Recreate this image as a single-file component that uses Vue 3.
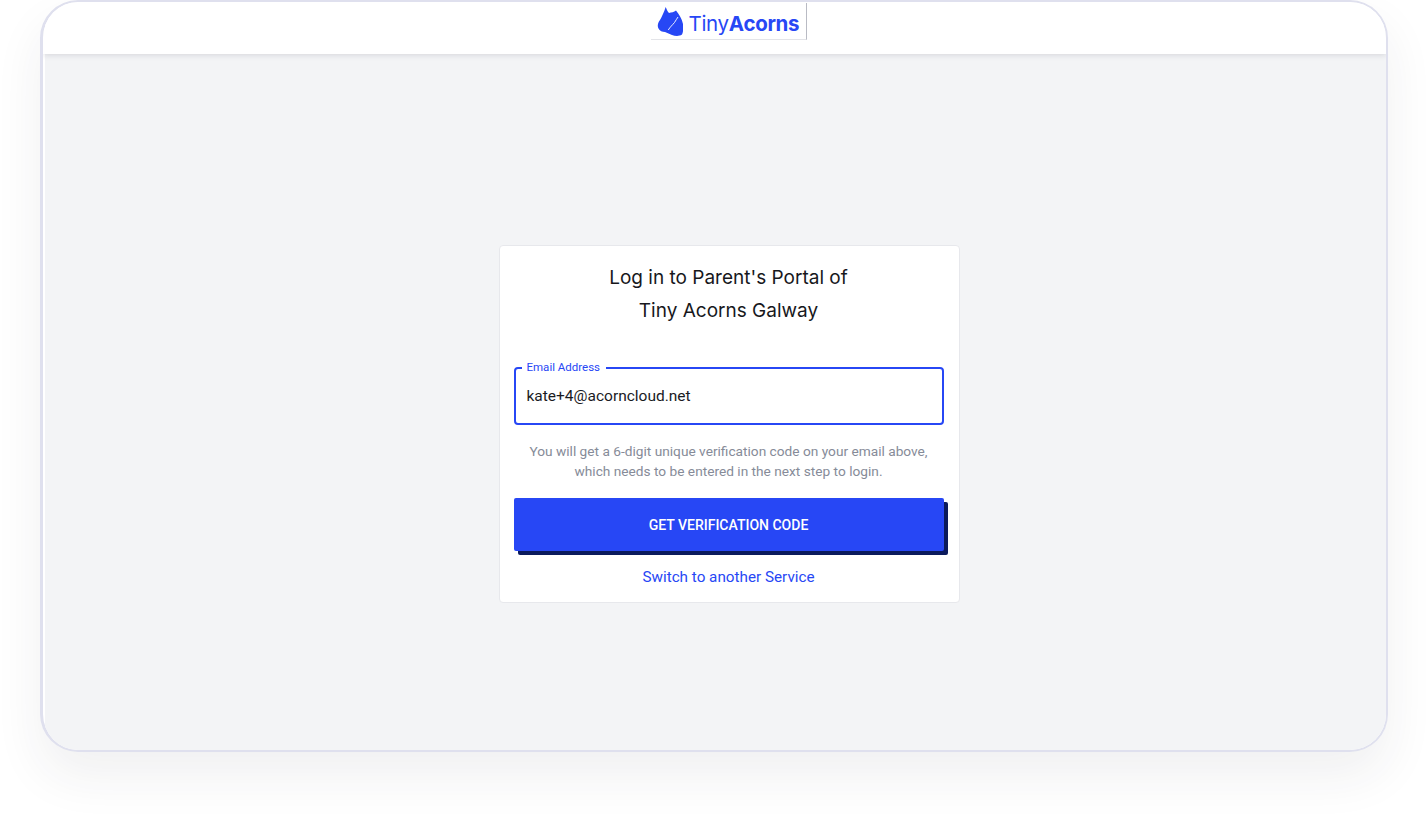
<template>
  <div class="page">
    <div class="frame">
      <header class="topbar">
        <div class="logo">
          <svg class="logo-icon" width="26" height="29" viewBox="0 0 26 29">
            <path d="M8.7 0 C9.5 2 10.5 4.5 12 6 C14.5 5.5 17 5 19 3.5 C22 7 25 12 26 17 C26.5 21 26.3 25 25 27.5 C22 29.5 18 29 15 28 C12.5 27 10.5 26 8 25 C5.5 25 2.5 24 1.5 21.5 C0 19 1 15.5 3 13 C5 9.5 7 5 8.7 0 Z" fill="#2747f5" />
            <path d="M11.3 23 C13 20 15.5 18 17.5 15.5 C18.7 13.8 19.8 11.5 21 10" fill="none" stroke="#fff" stroke-width="0.9" />
          </svg>
          <span class="logo-text">Tiny<b>Acorns</b></span>
        </div>
      </header>
      <main class="content">
        <section class="card">
          <h1 class="title">Log in to Parent's Portal of<br />Tiny Acorns Galway</h1>
          <div class="field">
            <label class="field-label">Email Address</label>
            <span class="value">kate+4@acorncloud.net</span>
          </div>
          <p class="hint">
            You will get a 6-digit unique verification code on your email above,<br />
            which needs to be entered in the next step to login.
          </p>
          <button class="submit">GET VERIFICATION CODE</button>
          <a class="switch">Switch to another Service</a>
        </section>
      </main>
    </div>
  </div>
</template>

<script setup>
</script>

<style>
html,
body {
  margin: 0;
  background: #fff;
}
</style>

<style scoped>
.page {
  width: 1428px;
  height: 832px;
  padding-left: 40px;
  box-sizing: border-box;
  overflow: hidden;
  font-family: Roboto, "Liberation Sans", sans-serif;
}

.frame {
  width: 1348px;
  height: 752px;
  box-sizing: border-box;
  border: 2px solid #dfe0ee;
  border-left-width: 3px;
  border-radius: 38px;
  background: #fff;
  box-shadow: 0 24px 50px rgba(40, 40, 60, 0.07);
  display: flex;
  flex-direction: column;
  overflow: hidden;
}

.topbar {
  height: 52px;
  flex: none;
  padding-left: 28px;
  background: #fff;
  display: flex;
  justify-content: center;
  position: relative;
  z-index: 1;
  box-shadow: 0 1px 6px rgba(30, 30, 50, 0.14);
}

.logo {
  width: 156px;
  height: 37px;
  margin-top: 1px;
  box-sizing: border-box;
  border-right: 1px solid #b9bbc4;
  border-bottom: 1px solid #e3e4e8;
  display: flex;
  align-items: center;
  padding-left: 6px;
}

.logo-icon {
  margin-right: 6px;
  flex: none;
}

.logo-text {
  margin-top: 4px;
  font-family: Inter, "Liberation Sans", sans-serif;
  font-size: 20.5px;
  letter-spacing: -0.3px;
  color: #2747f5;
}

.logo-text b {
  font-weight: 700;
}

.content {
  flex: 1;
  margin-left: 2px;
  padding-left: 27px;
  padding-top: 191px;
  background: #f3f4f6;
  display: flex;
  justify-content: center;
}

.card {
  width: 461px;
  height: 358px;
  box-sizing: border-box;
  padding: 15px 15px 0 14px;
  background: #fff;
  border: 1px solid #e7e8ec;
  border-radius: 4px;
  display: flex;
  flex-direction: column;
  align-items: center;
}

.title {
  margin: 0;
  font-family: Inter, "Liberation Sans", sans-serif;
  font-size: 19px;
  font-weight: 420;
  line-height: 33px;
  color: #17181c;
  text-align: center;
}

.field {
  position: relative;
  width: 100%;
  height: 58px;
  flex: none;
  margin-top: 40px;
  padding: 0 11px;
  box-sizing: border-box;
  border: 2px solid #2747f5;
  border-radius: 4px;
  display: flex;
  align-items: center;
}

.field-label {
  position: absolute;
  top: -9px;
  left: 6px;
  padding: 0 6px 0 5px;
  background: #fff;
  font-size: 11.5px;
  line-height: 14px;
  color: #2747f5;
}

.value {
  font-size: 15.5px;
  color: #1a1b1f;
}

.hint {
  margin: 16px 0 0;
  font-size: 13.7px;
  line-height: 20px;
  color: #868b98;
  text-align: center;
}

.submit {
  width: 100%;
  height: 53px;
  flex: none;
  margin-top: 17px;
  border: none;
  border-radius: 2px;
  background: #2747f5;
  box-shadow: 4px 4px 0 #0b1a5c;
  color: #fff;
  font-family: Roboto, "Liberation Sans", sans-serif;
  font-size: 14px;
  font-weight: 500;
}

.switch {
  margin-top: 17px;
  font-size: 15.25px;
  color: #2747f5;
}
</style>
